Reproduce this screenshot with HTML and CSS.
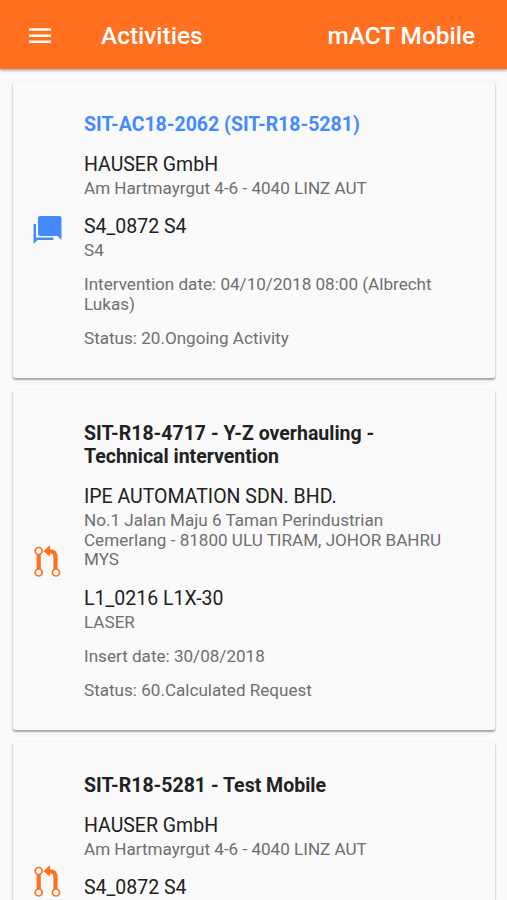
FILE: index.html
```html
<!DOCTYPE html>
<html lang="en">
<head>
<meta charset="utf-8">
<title>Activities</title>
<link rel="stylesheet" href="styles.css">
</head>
<body>
<header class="bar">
  <svg class="menu" viewBox="0 0 28 28"><path d="M3 6.200h22v2.500H3zM3 12.400h22v2.500H3zM3 18.600h22v2.500H3z"/></svg>
  <h1 class="title">Activities</h1>
  <span class="brand">mACT Mobile</span>
</header>
<main class="list">
  <article class="card card-chat">
    <div class="side"><svg class="chat" viewBox="0 0 29 28"><path d="M7 0H26.5Q28.500 0 28.500 2V24L24.500 20H7Q5 20 5 18V2Q5 0 7 0Z"/><path d="M.5 8H3V21.5H20.500V24H4.500L.5 28Z"/></svg></div>
    <div class="body">
      <h2 class="code link">SIT-AC18-2062 (SIT-R18-5281)</h2>
      <h3>HAUSER GmbH</h3>
      <p>Am Hartmayrgut 4-6 - 4040 LINZ AUT</p>
      <h3>S4_0872 S4</h3>
      <p>S4</p>
      <p class="meta">Intervention date: 04/10/2018 08:00 (Albrecht<br>Lukas)</p>
      <p class="meta">Status: 20.Ongoing Activity</p>
    </div>
  </article>
  <article class="card card-request">
    <div class="side"><svg class="pull" viewBox="0 0 28 34"><g fill="none" stroke="currentColor"><circle cx="5.700" cy="7" r="3.500" stroke-width="1.700"/><circle cx="5.700" cy="28.500" r="3.500" stroke-width="1.700"/><circle cx="23" cy="28.500" r="3.500" stroke-width="1.700"/><path stroke-width="4.200" d="M5.700 10.500V25M22.500 25V13Q22.500 7.500 17 7.300H15"/></g><path d="M10.500 7L17 1.200V12.800Z"/></svg></div>
    <div class="body">
      <h2 class="code">SIT-R18-4717 - Y-Z overhauling -<br>Technical intervention</h2>
      <h3>IPE AUTOMATION SDN. BHD.</h3>
      <p>No.1 Jalan Maju 6 Taman Perindustrian<br>Cemerlang - 81800 ULU TIRAM, JOHOR BAHRU<br>MYS</p>
      <h3>L1_0216 L1X-30</h3>
      <p>LASER</p>
      <p class="meta">Insert date: 30/08/2018</p>
      <p class="meta">Status: 60.Calculated Request</p>
    </div>
  </article>
  <article class="card card-last">
    <div class="side"><svg class="pull" viewBox="0 0 28 34"><g fill="none" stroke="currentColor"><circle cx="5.700" cy="7" r="3.500" stroke-width="1.700"/><circle cx="5.700" cy="28.500" r="3.500" stroke-width="1.700"/><circle cx="23" cy="28.500" r="3.500" stroke-width="1.700"/><path stroke-width="4.200" d="M5.700 10.500V25M22.500 25V13Q22.500 7.500 17 7.300H15"/></g><path d="M10.500 7L17 1.200V12.800Z"/></svg></div>
    <div class="body">
      <h2 class="code">SIT-R18-5281 - Test Mobile</h2>
      <h3>HAUSER GmbH</h3>
      <p>Am Hartmayrgut 4-6 - 4040 LINZ AUT</p>
      <h3>S4_0872 S4</h3>
    </div>
  </article>
</main>
</body>
</html>
```
FILE: styles.css
```css
* { box-sizing: border-box; margin: 0; padding: 0; }
body { height: 900px; overflow: hidden; background: #fafafa; font-family: Roboto, sans-serif; color: #212121; }
svg { display: block; fill: currentColor; }
.bar { height: 69px; display: flex; align-items: center; padding: 2px 32px 0 26px; background: #ff7020; color: #fff; box-shadow: 0 1px 3px rgba(0,0,0,.45); }
.menu { width: 28px; height: 28px; }
.title, .brand { font-size: 24.4px; font-weight: 500; line-height: 30px; }
.title { margin-left: 47px; }
.brand { margin-left: auto; }
.list { height: 831px; overflow: hidden; display: flex; flex-direction: column; gap: 12px; padding: 13px 12px 0 13px; }
.card { display: flex; flex: none; background: #fafafa; border-radius: 2px; box-shadow: 0 2px 2px rgba(0,0,0,.28), 0 1px 3px rgba(0,0,0,.14); }
.card-chat { height: 296px; }
.card-request { height: 340px; }
.card-last { height: 158px; border-radius: 2px 2px 0 0; }
.side { width: 71px; display: flex; align-items: center; padding-left: 20px; }
.card-request .side { padding-top: 2px; }
.card-last .side { align-items: flex-end; padding-bottom: 2px; }
.chat { width: 29px; height: 28px; color: #448aff; }
.pull { width: 28px; height: 34px; color: #ff7020; }
.body { padding-top: 31px; white-space: nowrap; }
.card-request .body { padding-top: 32px; }
.card-last .body { padding-top: 32px; }
.code { font-size: 19.5px; line-height: 23px; font-weight: 700; }
.link { color: #448aff; }
h3 { font-size: 19.5px; line-height: 23px; font-weight: 400; margin-top: 17px; }
p { font-size: 17.08px; line-height: 19.6px; color: #6f6f6f; margin-top: 3px; }
p + h3 { margin-top: 16.4px; }
.card-request p + h3 { margin-top: 17px; }
.meta { margin-top: 14.7px; }
```
